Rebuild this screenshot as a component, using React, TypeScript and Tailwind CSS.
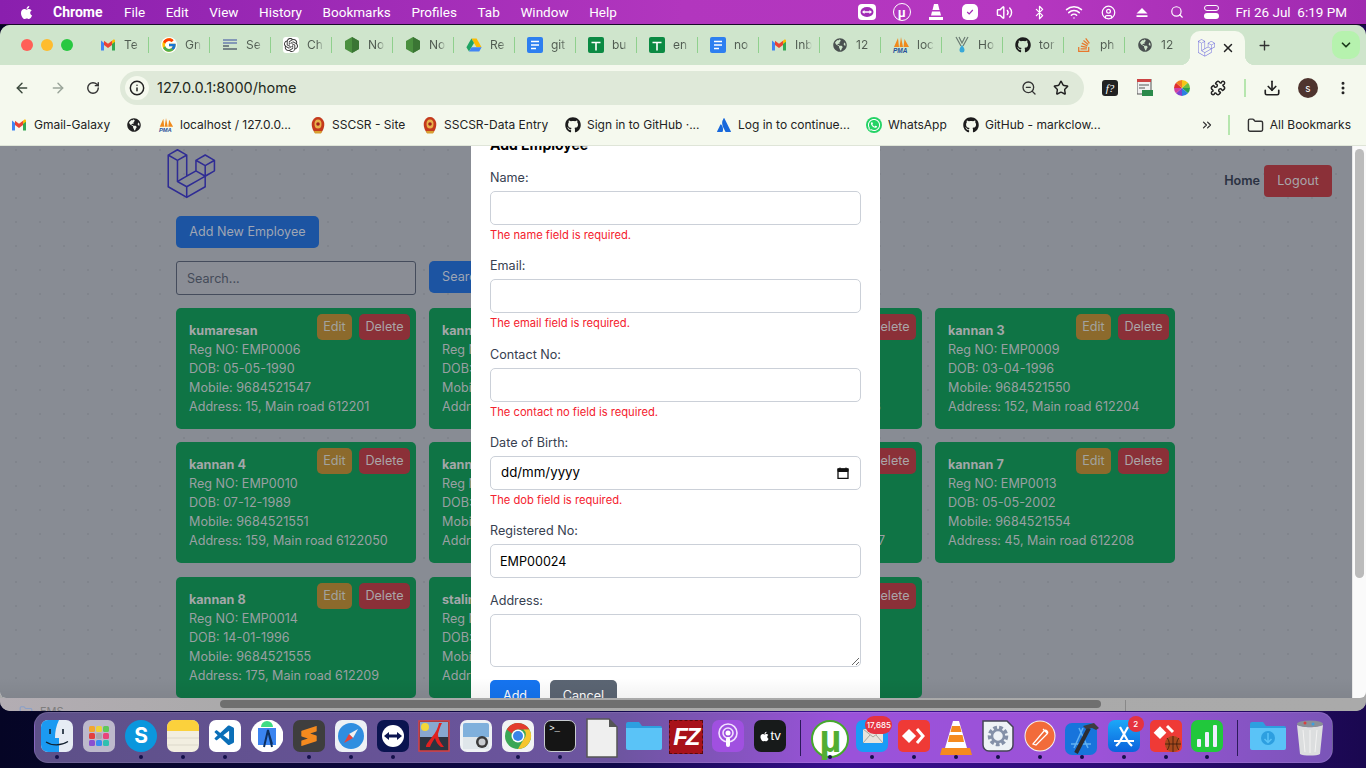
import React from "react";
import { ArrowLeft, ArrowRight, RotateCw, Info, ZoomOut, Star, Download, EllipsisVertical, Plus, X, ChevronDown, Folder, ChevronsRight, Volume2, Bluetooth, Wifi, CircleUser, Search, Puzzle } from "lucide-react";
import { FaApple, FaGithub, FaGlobeAmericas, FaStackOverflow, FaWhatsapp } from "react-icons/fa";
import { FcGoogle } from "react-icons/fc";
import { VscVscode } from "react-icons/vsc";
import { SiSublimetext, SiOpenai, SiAtlassian } from "react-icons/si";

const LARAVEL = "M49.626 11.564a.809.809 0 0 1 .028.209v10.972a.8.8 0 0 1-.402.694l-9.209 5.302V39.25c0 .286-.152.55-.4.694L20.42 51.01c-.044.025-.092.041-.14.058-.018.006-.035.017-.054.022a.805.805 0 0 1-.41 0c-.022-.006-.042-.018-.063-.026-.044-.016-.09-.03-.132-.054L.402 39.944A.801.801 0 0 1 0 39.25V6.334c0-.072.01-.142.028-.21.006-.023.02-.044.028-.067.015-.042.029-.085.051-.124.015-.026.037-.047.055-.071.023-.032.044-.065.071-.093.023-.023.053-.04.079-.06.029-.024.055-.05.088-.069h.001l9.61-5.533a.802.802 0 0 1 .8 0l9.61 5.533h.002c.032.02.059.045.088.068.026.02.055.038.078.06.028.029.048.062.072.094.017.024.04.045.054.071.023.04.036.082.052.124.008.023.022.044.028.068a.809.809 0 0 1 .028.209v20.559l8.008-4.611v-10.51c0-.07.01-.141.028-.208.007-.024.02-.045.028-.068.016-.042.03-.085.052-.124.015-.026.037-.047.054-.071.024-.032.044-.065.072-.093.023-.023.052-.04.078-.06.03-.024.056-.05.088-.069h.001l9.611-5.533a.801.801 0 0 1 .8 0l9.61 5.533c.034.02.06.045.09.068.025.02.054.038.077.06.028.029.048.062.072.094.018.024.04.045.054.071.023.039.036.082.052.124.009.023.022.044.028.068zm-1.574 10.718v-9.124l-3.363 1.936-4.646 2.675v9.124l8.01-4.611zm-9.61 16.505v-9.13l-4.57 2.61-13.05 7.448v9.216l17.62-10.144zM1.602 7.719v31.068L19.22 48.93v-9.214l-9.204-5.209-.003-.002-.004-.002c-.031-.018-.057-.044-.086-.066-.025-.02-.054-.036-.076-.058l-.002-.003c-.026-.025-.044-.056-.066-.084-.02-.027-.044-.05-.06-.078l-.001-.003c-.018-.03-.029-.066-.042-.1-.013-.03-.03-.058-.038-.09v-.001c-.01-.038-.012-.078-.016-.117-.004-.03-.012-.06-.012-.09v-.002-21.481L4.965 9.654 1.602 7.72zm8.81-5.994L2.405 6.334l8.005 4.609 8.006-4.61-8.006-4.608zm4.164 28.764l4.645-2.674V7.719l-3.363 1.936-4.646 2.675v20.096l3.364-1.937zM39.243 7.164l-8.006 4.609 8.006 4.609 8.005-4.61-8.005-4.608zm-.801 10.605l-4.646-2.675-3.363-1.936v9.124l4.645 2.674 3.364 1.937v-9.124zM20.02 38.33l11.743-6.704 5.87-3.35-8-4.606-9.211 5.303-8.395 4.833 7.993 4.524z";

const Laravel = ({ cls, color }: { cls: string; color: string }) => (
  <svg viewBox="0 0 50 52" className={cls} fill={color}><path d={LARAVEL} /></svg>
);
const Gmail = () => (
  <svg viewBox="0 0 16 16" className="h-4 w-4">
    <path d="M1 13.5V3.6l3 2.3v7.6z" fill="#4285f4" /><path d="M15 13.5V3.6l-3 2.3v7.6z" fill="#34a853" />
    <path d="M4 8V3.8l4 3 4-3V8l-4 3z" fill="#ea4335" /><path d="M12 3.8l1.4-1.2c.7-.4 1.6.1 1.6 1v1.2L12 7z" fill="#fbbc04" />
  </svg>
);
const Docs = () => (
  <svg viewBox="0 0 16 16" className="h-4 w-4"><rect width="16" height="16" x="0" y="0" rx="2" fill="#2d7ff0" /><path d="M4 4.5h8M4 8h8M4 11.5h5" stroke="#fff" strokeWidth="1.6" /></svg>
);
const Sheets = () => (
  <svg viewBox="0 0 16 16" className="h-4 w-4"><rect width="16" height="16" rx="2" fill="#0b8a43" /><path d="M3.5 5.5h9M8 5.5v8" stroke="#fff" strokeWidth="1.6" /></svg>
);
const Node = () => (
  <svg viewBox="0 0 16 16" className="h-[18px] w-[16px]"><path d="M8 0l7 4v8l-7 4-7-4V4z" fill="#4a8f3f" /><path d="M8 0l7 4v8l-7 4z" fill="#3a7534" /></svg>
);
const Drive = () => (
  <svg viewBox="0 0 16 16" className="h-4 w-4"><path d="M5.4 1.5h5.2l5 8.7H10.500z" fill="#fbbc04" /><path d="M5.400 1.500L.4 10.200l2.600 4.400 5-8.700z" fill="#1fa463" /><path d="M3 14.600h10.200l2.400-4.400H5.500z" fill="#4285f4" /></svg>
);
const Pma = () => (
  <svg viewBox="0 0 18 18" className="h-[18px] w-[18px]">
    <path d="M2 11L6 2l1 9zM7.500 11L9 1l2 10zM11.500 11L12.500 3 17 11z" fill="#f08a1c" />
    <text x="1" y="17" fontSize="6.500" fontWeight="700" fontStyle="italic" fill="#26509a" fontFamily="Liberation Sans, sans-serif">PMA</text>
  </svg>
);
const Globe = () => <FaGlobeAmericas className="h-[14px] w-[14px] text-[#4a5150]" />;
const Chatgpt = () => (
  <span className="flex h-4 w-4 items-center justify-center rounded-[3px] bg-white"><SiOpenai className="h-[14px] w-[14px] text-[#333]" /></span>
);
const Hop = () => (
  <svg viewBox="0 0 16 18" className="h-[18px] w-4"><path d="M2 1l5 9M14 1L9 10M5 1l3 6 3-6" stroke="#6a7a72" strokeWidth="1.200" fill="none" /><path d="M8 9c2 2.500 2.500 3.500 2.500 5a2.500 2.500 0 0 1-5 0c0-1.500.5-2.500 2.500-5z" fill="#38a8d8" /></svg>
);
const Emblem = () => (
  <svg viewBox="0 0 16 18" className="h-[18px] w-4"><path d="M8 1c3 0 5 2 6 5 1 4-1 9-3 11H5C3 15 1 10 2 6c1-3 3-5 6-5z" fill="#c43a1c" /><ellipse cx="8" cy="8" rx="3.500" ry="4.500" fill="#e8b14a" /><circle cx="8" cy="8" r="1.800" fill="#a3201a" /><path d="M4 15h8l-1 2.500H5z" fill="#d8a030" /></svg>
);

const tabs: [React.ReactNode, string][] = [
  [<Gmail />, "Te"], [<FcGoogle className="h-4 w-4 rounded-full bg-white" />, "Gn"],
  [<svg viewBox="0 0 16 16" className="h-4 w-4"><path d="M1 3h14M1 6h14" stroke="#6b7fb0" strokeWidth="1.500" /><path d="M1 9h6M1 12h14" stroke="#5a6470" strokeWidth="1.500" /></svg>, "Se"],
  [<Chatgpt />, "Ch"], [<Node />, "No"], [<Node />, "No"], [<Drive />, "Re"], [<Docs />, "git"], [<Sheets />, "bu"], [<Sheets />, "en"],
  [<Docs />, "no"], [<Gmail />, "Inb"], [<Globe />, "12"], [<Pma />, "loc"], [<Hop />, "Ho"],
  [<FaGithub className="h-4 w-4 text-[#1c1c1c]" />, "tor"], [<FaStackOverflow className="h-4 w-4 text-[#e8782c]" />, "ph"], [<Globe />, "12"],
];

const bookmarks: [React.ReactNode, string, string][] = [
  [<Gmail />, "Gmail-Galaxy", "w-[115px]"],
  [<FaGlobeAmericas className="h-[14px] w-[14px] text-[#222]" />, "", "w-[32px]"],
  [<Pma />, "localhost / 127.0.0...", "w-[152px]"],
  [<Emblem />, "SSCSR - Site", "w-[112px]"],
  [<Emblem />, "SSCSR-Data Entry", "w-[143px]"],
  [<FaGithub className="h-4 w-4 text-[#1c1c1c]" />, "Sign in to GitHub ·...", "w-[151px]"],
  [<SiAtlassian className="h-[14px] w-[14px] text-[#1868db]" />, "Log in to continue...", "w-[150px]"],
  [<FaWhatsapp className="h-4 w-4 rounded-full bg-[#25d366] p-[1px] text-white" />, "WhatsApp", "w-[97px]"],
  [<FaGithub className="h-4 w-4 text-[#1c1c1c]" />, "GitHub - markclow...", "w-[137px]"],
];

const menus = ["File", "Edit", "View", "History", "Bookmarks", "Profiles", "Tab", "Window", "Help"];

const MenuIcons: React.ReactNode[] = [
  <svg viewBox="0 0 18 16" className="h-[16px] w-[18px]"><rect width="18" height="16" rx="4" fill="#fff" /><ellipse cx="9" cy="8" rx="6.500" ry="5" fill="#a02cb5" /><path d="M4 8l2.500-2v1.300h5V6L14 8l-2.500 2V8.700h-5V10z" fill="#fff" /></svg>,
  <span className="flex h-[18px] w-[18px] items-center justify-center rounded-full border border-white text-[13px] font-bold leading-none text-white">µ</span>,
  <svg viewBox="0 0 16 18" className="h-[18px] w-4"><path d="M6 1h4l1.500 6h-7zM4 8.500h8l1 4H3zM1 14h14v3H1z" fill="#fff" /></svg>,
  <span className="flex h-[16px] w-[16px] items-center justify-center rounded-[5px] bg-white"><svg viewBox="0 0 10 10" className="h-2 w-2"><path d="M1.500 5l2.500 2.500L8.500 2.500" stroke="#a02cb5" strokeWidth="1.500" fill="none" /></svg></span>,
  <Volume2 className="h-[17px] w-[17px]" />,
  <Bluetooth className="h-[15px] w-[15px]" />,
  <Wifi className="h-[18px] w-[18px]" />,
  <CircleUser className="h-[15px] w-[15px]" />,
  <svg viewBox="0 0 14 12" className="h-[11px] w-[14px]"><path d="M7 1l6 6H1zM1 9h12v2H1z" fill="#fff" /></svg>,
  <Search className="h-[14px] w-[14px]" />,
  <span className="flex w-[15px] flex-col gap-[2px]"><span className="h-[6px] rounded-full border border-white" /><span className="h-[6px] rounded-full bg-white" /></span>,
];

type Emp = { name: string; reg: string; dob: string; mobile: string; addr: string };
const emps: Emp[] = [
  { name: "kumaresan", reg: "EMP0006", dob: "05-05-1990", mobile: "9684521547", addr: "15, Main road 612201" },
  { name: "kannan", reg: "EMP0007", dob: "02-03-1992", mobile: "9684521548", addr: "25, Main road 612202" },
  { name: "kannan 2", reg: "EMP0008", dob: "11-06-1994", mobile: "9684521549", addr: "35, Main road 612203" },
  { name: "kannan 3", reg: "EMP0009", dob: "03-04-1996", mobile: "9684521550", addr: "152, Main road 612204" },
  { name: "kannan 4", reg: "EMP0010", dob: "07-12-1989", mobile: "9684521551", addr: "159, Main road 6122050" },
  { name: "kannan 5", reg: "EMP0011", dob: "09-09-1991", mobile: "9684521552", addr: "65, Main road 612206" },
  { name: "kannan 6", reg: "EMP0012", dob: "21-08-1993", mobile: "9684521553", addr: "159, Main road 612207" },
  { name: "kannan 7", reg: "EMP0013", dob: "05-05-2002", mobile: "9684521554", addr: "45, Main road 612208" },
  { name: "kannan 8", reg: "EMP0014", dob: "14-01-1996", mobile: "9684521555", addr: "175, Main road 612209" },
  { name: "stalin", reg: "EMP0015", dob: "10-10-1990", mobile: "9684521556", addr: "18, Main road 612210" },
  { name: "kannan 9", reg: "EMP0016", dob: "12-02-1995", mobile: "9684521557", addr: "20, Main road 612211" },
];

function Card({ e }: { e: Emp }) {
  return (
    <div className="relative h-[121px] rounded-[5px] bg-[#0f7445] px-[13px] py-[13px] text-[12.600px] leading-[19px] text-[#9aa0a3]">
      <div className="font-bold text-[#a3a7a9]">{e.name}</div>
      <div>Reg NO: {e.reg}</div>
      <div>DOB: {e.dob}</div>
      <div>Mobile: {e.mobile}</div>
      <div>Address: {e.addr}</div>
      <div className="absolute right-[6px] top-[6px] flex gap-[7px]">
        <span className="flex h-[26px] w-[35px] items-center justify-center rounded-[5px] bg-[#8c6a2c] pb-[1px] text-[#a2a39f]">Edit</span>
        <span className="flex h-[26px] w-[51px] items-center justify-center rounded-[5px] bg-[#8b3038] pb-[1px] text-[#aaa6a9]">Delete</span>
      </div>
    </div>
  );
}

function Field({ label, error, children, mb }: { label: string; error?: string; children: React.ReactNode; mb: string }) {
  return (
    <div className={mb}>
      <div className="mb-[3px] h-5 text-[12.600px] leading-[20px] text-[#374151]">{label}</div>
      {children}
      {error && <div className="mt-[2px] h-4 text-[11.200px] leading-4 text-[#f4222e]">{error}</div>}
    </div>
  );
}
const inputCls = "block h-[34px] w-full rounded-[5px] border border-[#cbd0d8] bg-white px-[9px] text-[12.600px] text-black outline-none";

const Dot = () => <span className="absolute bottom-[3px] h-[4px] w-[4px] rounded-full bg-[#14104a]" />;

function Badge({ t, cls }: { t: string; cls: string }) {
  return <span className={"absolute flex h-[18px] items-center justify-center rounded-full bg-[#e5333f] text-[8px] font-medium text-white " + cls}>{t}</span>;
}

const S = ({ children }: { children: React.ReactNode }) => <svg viewBox="0 0 32 32" className="h-8 w-8">{children}</svg>;

const dock: { i: React.ReactNode; on: boolean }[] = [
  { on: true, i: <S><rect width="32" height="32" rx="7" fill="#e6ecf4" /><path d="M7 0h11c-3 6-4 12-4 18h4v14H7a7 7 0 0 1-7-7V7a7 7 0 0 1 7-7z" fill="#1b9af2" /><path d="M9 9v5M22 9v5" stroke="#12202e" strokeWidth="1.600" /><path d="M5 22c6 4 15 4 22-.5" stroke="#12202e" strokeWidth="1.200" fill="none" /></S> },
  { on: false, i: <S><rect width="32" height="32" rx="7" fill="#bdb9cc" /><g>{[["#f2a62e", 6, 6], ["#ecd23a", 13, 6], ["#5fc85a", 20, 6], ["#e33e3e", 6, 13], ["#a8a8b0", 13, 13], ["#e8457a", 20, 13], ["#8a4fd0", 6, 20], ["#3a8cf0", 13, 20], ["#30c0b0", 20, 20]].map(([c, x, y]) => <rect key={`${x}${y}`} x={x as number} y={y as number} width="6" height="6" rx="1.500" fill={c as string} />)}</g></S> },
  { on: true, i: <span className="flex h-8 w-8 items-center justify-center rounded-full bg-[#0b97dd] text-[21px] font-bold text-white">S</span> },
  { on: true, i: <S><rect width="32" height="32" rx="7" fill="#f2eee0" /><path d="M0 11V7a7 7 0 0 1 7-7h18a7 7 0 0 1 7 7v4z" fill="#fbd13c" /><path d="M0 18h32M0 25h32" stroke="#dcd8ca" /></S> },
  { on: true, i: <span className="flex h-8 w-8 items-center justify-center rounded-[7px] bg-white"><VscVscode className="h-6 w-6 text-[#0b6fb8]" /></span> },
  { on: false, i: <S><circle cx="16" cy="16" r="16.500" fill="#fff" /><path d="M10 7a6 6 0 0 1 12 0z" fill="#3ddc84" /><rect x="7" y="8" width="18" height="17" fill="#3a84f0" /><path d="M13 27l4-17 4 17M18 14l3 10" stroke="#0c2f60" strokeWidth="2" fill="none" /></S> },
  { on: true, i: <span className="flex h-8 w-8 items-center justify-center rounded-[7px] bg-[#3e3e3e]"><SiSublimetext className="h-5 w-5 text-[#f58a1f]" /></span> },
  { on: true, i: <S><rect width="32" height="32" rx="7" fill="#edf1f5" /><circle cx="16" cy="16" r="13" fill="#2f8ee0" /><path d="M23 9l-9 5 4 4z" fill="#f0f0f0" /><path d="M9 23l5-9 4 4z" fill="#e8433a" /></S> },
  { on: true, i: <S><rect width="32" height="32" rx="7" fill="#0a1450" /><circle cx="16" cy="16" r="11" fill="#fff" /><path d="M7 16l5-4v2.500h8V12l5 4-5 4v-2.500h-8V20z" fill="#0a1450" /></S> },
  { on: false, i: <S><rect x="1" y="1" width="30" height="30" fill="#2c3440" stroke="#d84040" strokeWidth="1.500" /><rect x="2" y="2" width="28" height="15" fill="#88a8d0" /><circle cx="7" cy="7" r="4" fill="#f4d838" /><path d="M21 3c-1 5-3 9-7 14-3 4-6 7-6 10h4c1-3 3-6 5-9 1 4 3 7 6 9h3c-3-4-6-8-6-13 1-4 2-7 4-11z" fill="#e02020" /></S> },
  { on: false, i: <S><rect width="32" height="32" rx="7" fill="#eef1f4" /><rect x="3" y="3" width="26" height="26" rx="2" fill="#7fb0dc" /><rect x="3" y="17" width="26" height="12" fill="#dfe6ea" /><circle cx="22" cy="22" r="6" fill="#3a3a3a" /><circle cx="22" cy="22" r="3.500" fill="#c8ccd0" /></S> },
  { on: true, i: <S><rect width="32" height="32" rx="7" fill="#f2f3f4" /><circle cx="16" cy="16" r="13" fill="#3aa655" /><path d="M16 3a13 13 0 0 1 11.300 6.500H16a6.500 6.500 0 0 0-6 4L4.800 9.500A13 13 0 0 1 16 3z" fill="#e33b2e" /><path d="M27.300 9.500A13 13 0 0 1 16 29l5.500-9.500a6.500 6.500 0 0 0 0-10z" fill="#f7c52d" /><circle cx="16" cy="16" r="6.500" fill="#fff" /><circle cx="16" cy="16" r="5" fill="#3a84e8" /></S> },
  { on: true, i: <span className="flex h-8 w-8 items-start rounded-[7px] border border-[#c8ccd0] bg-[#151515] p-[4px] font-['Liberation_Mono'] text-[9px] leading-none text-white">&gt;_</span> },
  { on: false, i: <svg viewBox="0 0 32 40" className="mt-[-5px] h-[46px] w-[32px]"><path d="M1 1h22l8 8v30H1z" fill="#efefef" stroke="#555" strokeWidth="1.500" /><path d="M23 1l8 8h-8z" fill="#555" /></svg> },
  { on: false, i: <svg viewBox="0 0 36 32" className="h-8 w-9"><path d="M0 4a2 2 0 0 1 2-2h11l3 4h18a2 2 0 0 1 2 2v4H0z" fill="#2d9fe0" /><path d="M0 8h36v20a2 2 0 0 1-2 2H2a2 2 0 0 1-2-2z" fill="#5ac3f7" /></svg> },
  { on: false, i: <span className="flex h-[34px] w-[34px] items-center justify-center border border-dashed border-[#5a0a0a] bg-[#a8121a] font-['Liberation_Sans'] text-[24px] font-bold italic leading-none tracking-[-2px] text-white">FZ</span> },
  { on: false, i: <S><rect width="32" height="32" rx="7" fill="#a050e0" /><circle cx="16" cy="13" r="9" fill="none" stroke="#f2e2ff" strokeWidth="1.600" /><circle cx="16" cy="13" r="5" fill="none" stroke="#f2e2ff" strokeWidth="1.600" /><circle cx="16" cy="13" r="2.500" fill="#fff" /><rect x="14" y="17" width="4" height="10" rx="2" fill="#fff" /></S> },
  { on: false, i: <span className="flex h-8 w-8 items-center justify-center gap-[1px] rounded-[7px] bg-[#171a1a] font-['Liberation_Sans'] text-[13px] font-medium text-white"><FaApple className="h-[11px] w-[11px]" />tv</span> },
  { on: true, i: <span className="relative block h-[38px] w-[38px]"><span className="absolute inset-0 flex items-center justify-center rounded-full border-[2px] border-[#45a92c] bg-white font-['Liberation_Sans'] text-[38px] font-bold leading-none text-[#52ae32]">µ</span></span> },
  { on: true, i: <span className="relative block h-8 w-8"><S><rect width="32" height="32" rx="7" fill="#1a9cf6" /><rect x="7" y="9" width="20" height="14" fill="#e8e4dc" /><path d="M7 9l10 8 10-8M7 23l7-8M27 23l-7-8" stroke="#a8a8a0" fill="none" /></S><Badge t="17,685" cls="-top-[4px] -right-[4px] w-[27px]" /></span> },
  { on: true, i: <S><rect width="32" height="32" rx="5" fill="#ef3a36" /><rect x="6" y="11" width="10" height="10" transform="rotate(45 11 16)" fill="#fff" /><path d="M19 9l6 7-6 7" stroke="#fff" strokeWidth="3" fill="none" /></S> },
  { on: true, i: <svg viewBox="0 0 32 36" className="h-9 w-8"><path d="M13 1h6l8 27H5z" fill="#fff" /><path d="M12 6h8l1.500 6H10.500zM9.500 15h13l1.500 7H8z" fill="#f58a1f" /><path d="M2 28h28l2 7H0z" fill="#f58a1f" /></svg> },
  { on: true, i: <S><path d="M1 1h24l6 6v18a6 6 0 0 1-6 6H7a6 6 0 0 1-6-6z" fill="#eef2f6" stroke="#445" strokeWidth="1.500" /><circle cx="16" cy="16" r="8" fill="none" stroke="#8490a8" strokeWidth="4.500" strokeDasharray="3.500 2" /><circle cx="16" cy="16" r="6" fill="none" stroke="#8490a8" strokeWidth="2.500" /></S> },
  { on: true, i: <S><circle cx="16" cy="16" r="15.500" fill="#f4f4f4" /><circle cx="16" cy="16" r="14.500" fill="#f26b3a" /><path d="M9 24L20 11c2-2 5 1 3 3L12 25zM19 9l4 4" stroke="#fff" strokeWidth="1.200" fill="none" /></S> },
  { on: true, i: <svg viewBox="0 0 36 36" className="h-9 w-9"><rect x="1" y="3" width="32" height="32" rx="7" fill="#1774dc" /><path d="M10 28l9-20M24 28L15 8M7 24h20" stroke="#62b2f2" strokeWidth="1.500" /><path d="M12 33L25 8" stroke="#2c2c30" strokeWidth="4" /><path d="M19 6l11-3 5 5-3 2-4-2-6 1z" fill="#3c3c40" /></svg> },
  { on: true, i: <span className="relative block h-8 w-8"><S><defs><linearGradient id="as" x1="0" y1="0" x2="0" y2="1"><stop offset="0" stopColor="#1ca8f8" /><stop offset="1" stopColor="#0c62dc" /></linearGradient></defs><rect width="32" height="32" rx="7" fill="url(#as)" /><path d="M12 7l9 16M20 7L11 23M6 21h20M21 23l3 3M11 23l-3 3" stroke="#fff" strokeWidth="2.200" fill="none" /></S><Badge t="2" cls="-top-[4px] -right-[4px] w-[16px] !h-[16px]" /></span> },
  { on: true, i: <S><rect width="32" height="32" rx="5" fill="#ef3a36" /><rect x="6" y="8" width="9" height="9" transform="rotate(45 10 12)" fill="#fff" /><path d="M17 6l6 6" stroke="#fff" strokeWidth="3" /><circle cx="23" cy="24" r="8" fill="#a84a1e" /><path d="M15 24h16M23 16v16M17 18c3 3 3 9 0 12M29 18c-3 3-3 9 0 12" stroke="#3a1a0a" strokeWidth=".8" fill="none" /></S> },
  { on: true, i: <S><rect width="32" height="32" rx="7" fill="#21c83c" /><rect x="6" y="19" width="4" height="8" rx="1" fill="#eef" /><rect x="14" y="12" width="4" height="15" rx="1" fill="#eef" /><rect x="22" y="5" width="4" height="22" rx="1" fill="#eef" /></S> },
  { on: false, i: <svg viewBox="0 0 36 32" className="h-8 w-9"><path d="M0 4a2 2 0 0 1 2-2h11l3 4h18a2 2 0 0 1 2 2v4H0z" fill="#2d9fe0" /><path d="M0 8h36v20a2 2 0 0 1-2 2H2a2 2 0 0 1-2-2z" fill="#5ac3f7" /><circle cx="18" cy="18" r="7" fill="#2d9fe0" /><path d="M18 13v9M14.500 19l3.500 3.500 3.500-3.500" stroke="#5ac3f7" strokeWidth="1.500" fill="none" /></svg> },
  { on: false, i: <svg viewBox="0 0 28 36" className="h-9 w-7"><ellipse cx="14" cy="4" rx="13" ry="3.500" fill="#8a9098" /><path d="M1 5l3 29c3 2 17 2 20 0l3-29c-5 3-21 3-26 0z" fill="#dcdedf" /><path d="M7 10l2 22M14 10v23M21 10l-2 22" stroke="#f2f2f2" /><circle cx="9" cy="3" r="1.500" fill="#d84040" /><circle cx="17" cy="4" r="1.500" fill="#3aa0e0" /></svg> },
];

export default function App() {
  const font = { fontFamily: "Inter, 'Noto Sans', sans-serif" };
  return (
    <div style={font} className="flex h-[768px] w-[1366px] flex-col overflow-hidden bg-[linear-gradient(90deg,#050525_0%,#10084a_45%,#3a0e90_62%,#2a0a70_85%,#1a0850_100%)]">
      {/* macOS menu bar */}
      <div className="flex h-[25px] shrink-0 items-center border-b border-[#1a0a2a] bg-[linear-gradient(90deg,#8a1fae_0%,#b236be_50%,#b537c0_75%,#a02ab0_100%)] font-['Roboto'] text-[13.500px] text-white">
        <FaApple className="ml-[19px] h-[15px] w-[15px]" />
        <span className="ml-[19px] w-[51px] text-[14px] font-bold">Chrome</span>
        <div className="ml-[20px] flex gap-[20.600px]">{menus.map((m) => <span key={m}>{m}</span>)}</div>
        <div className="ml-auto flex items-center">
          {MenuIcons.map((ic, i) => <span key={i} className="flex w-[34.400px] justify-center text-white">{ic}</span>)}
          <span className="ml-[7px] mr-[19px] whitespace-pre">Fri 26 Jul  6:19 PM</span>
        </div>
      </div>

      {/* Browser window */}
      <div className="flex h-[686px] shrink-0 flex-col overflow-hidden rounded-[10px] bg-[#a9a9a9]">
        {/* tabs */}
        <div className="flex h-10 shrink-0 items-end bg-[#cfe5cc]">
          <div className="flex h-full w-[88px] shrink-0 items-center gap-2 pl-[21px]">
            <span className="h-3 w-3 rounded-full bg-[#ff5f57]" />
            <span className="h-3 w-3 rounded-full bg-[#febc2e]" />
            <span className="h-3 w-3 rounded-full bg-[#28c840]" />
          </div>
          {tabs.map(([ic, t], i) => (
            <div key={i} className="relative flex h-full w-[61px] shrink-0 items-center pl-[11px]">
              <span className="flex w-[18px] justify-center">{ic}</span>
              <span className="ml-[7px] w-[17px] overflow-hidden whitespace-nowrap bg-[linear-gradient(90deg,#4f5a50_60%,#cfe5cc)] bg-clip-text text-[12px] text-transparent">{t}</span>
              {i < tabs.length - 1 && <span className="absolute right-0 top-[12px] h-4 w-[1.500px] bg-[#8fd08d]" />}
            </div>
          ))}
          <div className="relative ml-[4px] flex h-[34px] w-[55px] shrink-0 items-center rounded-t-[10px] bg-[#f5f9ee] pl-[8px]">
            <span className="absolute -left-[10px] bottom-0 h-[10px] w-[10px] bg-[radial-gradient(circle_at_0_0,transparent_10px,#f5f9ee_10.500px)]" />
            <span className="absolute -right-[10px] bottom-0 h-[10px] w-[10px] bg-[radial-gradient(circle_at_100%_0,transparent_10px,#f5f9ee_10.500px)]" />
            <Laravel cls="h-[18px] w-[17px]" color="#7a78e0" />
            <X className="ml-[6px] h-[14px] w-[14px] text-[#222]" strokeWidth={2.5} />
          </div>
          <Plus className="ml-[12px] mb-[12px] h-[15px] w-[15px] text-[#333]" strokeWidth={2.200} />
          <div className="mb-[6px] ml-[60px] flex h-[28px] w-[28px] items-center justify-center rounded-[10px] bg-[#b6f2ae]">
            <ChevronDown className="h-[14px] w-[14px] text-[#1c3a1c]" strokeWidth={3} />
          </div>
        </div>

        {/* toolbar */}
        <div className="flex h-[42px] shrink-0 items-center bg-[#f5f9ee] pt-[4px] text-[#3d4a3e]">
          <ArrowLeft className="ml-[14px] h-4 w-4" strokeWidth={2.200} />
          <ArrowRight className="ml-[20px] h-4 w-4 text-[#9aa59a]" strokeWidth={2.200} />
          <RotateCw className="ml-[20px] h-[14px] w-[14px] text-[#333]" strokeWidth={2.400} />
          <div className="ml-[20px] flex h-[34px] w-[964px] items-center rounded-full bg-[#dfe9d9] pl-[5px] pr-[15px]">
            <span className="flex h-6 w-6 items-center justify-center rounded-full bg-[#f5f9ee]"><Info className="h-4 w-4 text-[#222]" strokeWidth={2.200} /></span>
            <span className="ml-[8px] text-[14.500px] text-[#1f2a20]">127.0.0.1:8000/home</span>
            <ZoomOut className="ml-auto h-4 w-4 text-[#333]" />
            <Star className="ml-[16px] h-4 w-4 text-[#222]" strokeWidth={2.200} />
          </div>
          <span className="ml-[18px] flex h-4 w-4 items-center justify-center rounded-[3px] bg-[#222] font-['Liberation_Serif'] text-[11px] italic text-white">f?</span>
          <svg viewBox="0 0 16 18" className="ml-[19px] h-[18px] w-4"><rect x="0" y="0" width="14" height="15" fill="#f0f0f0" stroke="#555" /><rect x="0" y="0" width="14" height="3" fill="#c44" /><path d="M2 6h10M2 9h6" stroke="#555" /><rect x="5" y="11" width="11" height="6" fill="#2a8a4a" /></svg>
          <svg viewBox="0 0 16 16" className="ml-[21px] h-4 w-4"><path d="M8 8V0a8 8 0 0 1 6 2.700z" fill="#f5c518" /><path d="M8 8l6-5.300A8 8 0 0 1 16 8z" fill="#6fc040" /><path d="M8 8h8a8 8 0 0 1-2 5.300z" fill="#2aa050" /><path d="M8 8l6 5.300A8 8 0 0 1 8 16z" fill="#2a80e0" /><path d="M8 8v8a8 8 0 0 1-6-2.700z" fill="#8040d0" /><path d="M8 8l-6 5.300A8 8 0 0 1 0 8z" fill="#d040a0" /><path d="M8 8H0a8 8 0 0 1 2-5.300z" fill="#e03030" /><path d="M8 8L2 2.700A8 8 0 0 1 8 0z" fill="#f08020" /></svg>
          <Puzzle className="ml-[20px] h-4 w-4 text-[#222]" strokeWidth={2.200} />
          <span className="ml-[18px] h-[18px] w-[2px] bg-[#b6e6ae]" />
          <Download className="ml-[17px] h-[18px] w-[18px] text-[#222]" strokeWidth={2.200} />
          <span className="ml-[17px] flex h-5 w-5 items-center justify-center rounded-full bg-[#4e342e] text-[10px] text-white">s</span>
          <EllipsisVertical className="ml-[17px] h-4 w-4 text-[#222]" strokeWidth={2.500} />
        </div>

        {/* bookmarks */}
        <div className="flex h-[39px] shrink-0 items-center border-b border-[#dfe5d8] bg-[#f5f9ee] pb-[2px] pl-[11px] text-[12px] text-[#222]">
          {bookmarks.map(([ic, t, w], i) => (
            <div key={i} className={"flex shrink-0 items-center gap-[6px] " + w}>
              <span className="flex w-4 justify-center">{ic}</span>
              {t && <span className={i === 0 ? "ml-[1px] whitespace-nowrap" : "whitespace-nowrap"}>{t}</span>}
            </div>
          ))}
          <ChevronsRight className="ml-auto h-[14px] w-[14px] text-[#333]" strokeWidth={2.200} />
          <span className="ml-[14px] h-5 w-[2px] bg-[#b6e6ae]" />
          <Folder className="ml-[17px] h-[17px] w-[17px] text-[#333]" />
          <span className="ml-[6px] mr-[15px] whitespace-nowrap">All Bookmarks</span>
        </div>

        {/* page viewport */}
        <div className="relative flex h-[552px] shrink-0 overflow-hidden rounded-b-[6px] bg-[#fafafa]">
          <div className="relative h-full w-[1352px] shrink-0 overflow-hidden bg-[#888c94] bg-[radial-gradient(circle,#80848c_1px,transparent_1.200px)] bg-[size:24px_24px] bg-[position:4px_-8px]">
            <div className="flex h-[53px] items-start justify-between pl-[167px] pr-[20px]">
              <Laravel cls="mt-[3px] h-[50px] w-[49px]" color="#2f2c94" />
              <div className="mt-[19px] flex items-center gap-[4px] text-[12.600px]">
                <span className="font-semibold text-[#2b3242]">Home</span>
                <span className="flex h-[32px] w-[68px] items-center justify-center rounded-[4px] bg-[#8b3038] pt-[1px] text-[#a8a6aa]">Logout</span>
              </div>
            </div>
            <div className="pl-[176px] text-[12.600px]">
              <div className="mt-[17px] flex h-[32px] w-[143px] items-center justify-center rounded-[5px] bg-[#1c54a2] pt-[1px] text-[#9fa6b4]">Add New Employee</div>
              <div className="mt-[13px] flex items-start gap-[13px]">
                <div className="flex h-[34px] w-[240px] items-center rounded-[3px] border border-[#454c5c] bg-[#8a8d95] px-[10px] pt-[2px] text-[#444b59]">Search...</div>
                <div className="flex h-[32px] w-[68px] items-center justify-center rounded-[5px] bg-[#1c54a2] pt-[1px] text-[#9fa6b4]">Search</div>
              </div>
              <div className="mt-[13px] grid w-[999px] grid-cols-[repeat(4,240px)] gap-x-[13px] gap-y-[13.300px]">
                {emps.map((e) => <Card key={e.reg} e={e} />)}
              </div>
            </div>

            {/* modal */}
            <div className="absolute left-[471px] top-0 h-full w-[409px] overflow-hidden bg-white px-[19px]">
              <div className="-mt-[11px] mb-[13px] h-5 text-[14px] font-bold leading-5 text-black">Add Employee</div>
              <Field mb="mb-[13.250px]" label="Name:" error="The name field is required."><input className={inputCls} /></Field>
              <Field mb="mb-[13.250px]" label="Email:" error="The email field is required."><input className={inputCls} /></Field>
              <Field mb="mb-[13.250px]" label="Contact No:" error="The contact no field is required."><input className={inputCls} /></Field>
              <Field mb="mb-[13.250px]" label="Date of Birth:" error="The dob field is required.">
                <div className="flex h-[34px] w-full items-center justify-between rounded-[5px] border border-[#cbd0d8] bg-white pl-[10px] pr-[11px] text-[13.300px] text-black">
                  <span>dd/mm/yyyy</span>
                  <svg viewBox="0 0 12 12" className="h-3 w-3"><path d="M1 2h10v9.500H1z" fill="none" stroke="#111" strokeWidth="1.300" /><path d="M1 2h10v2.500H1zM3 .5v2M9 .5v2" fill="#111" stroke="#111" /></svg>
                </div>
              </Field>
              <Field mb="mb-[12.750px]" label="Registered No:"><input className={inputCls} defaultValue="EMP00024" /></Field>
              <Field mb="mb-[13px]" label="Address:"><textarea className="block h-[53px] w-full rounded-[5px] border border-[#cbd0d8] bg-white outline-none" /></Field>
              <div className="flex gap-[10px] text-[12.600px] text-white">
                <span className="flex h-[34px] w-[50px] items-center justify-center rounded-[5px] bg-[#1574f0]">Add</span>
                <span className="flex h-[34px] w-[67px] items-center justify-center rounded-[5px] bg-[#5b6573]">Cancel</span>
              </div>
            </div>
            <div className="absolute bottom-0 left-0 h-5 w-full bg-[linear-gradient(180deg,transparent,rgba(0,0,0,0.05))]" />
          </div>
          <div className="flex-1 border-l border-[#e8e8e8] pl-[2px] pt-[3px]">
            <div className="h-[429px] w-[9px] rounded-full bg-[#bbbbbb]" />
          </div>
        </div>

        {/* horizontal scrollbar / download shelf peeking below */}
        <div className="relative flex h-[13px] shrink-0 items-start overflow-hidden bg-[linear-gradient(90deg,#b3adb3,#a9a9a9_20%,#aaaaaa)] pl-[220px] pt-[2px]">
          <Folder className="absolute left-[19px] top-[7px] h-[14px] w-[14px] text-[#8aa0c8]" />
          <span className="absolute left-[40px] top-[6px] text-[11px] leading-[14px] text-[#7e7e7e]">EMS</span>
          <div className="h-[8px] w-[881px] rounded-full bg-[#6f6f6f]" />
          <div className="ml-[24px] h-[11px] w-px bg-[#888]" />
        </div>
      </div>

      {/* Dock */}
      <div className="ml-[33.500px] mt-[1px] flex h-[51px] w-[1299px] shrink-0 items-start rounded-[14px] border border-white/10 bg-[linear-gradient(90deg,#5d5088_0%,#6d55a0_45%,#9a52da_62%,#9c52d8_82%,#7a55b8_100%)] pl-[2px]">
        {dock.map((d, idx) => (
          <React.Fragment key={idx}>
            <div className="relative flex h-full w-[41.900px] shrink-0 justify-center pt-[7px]">
              {d.i}
              {d.on && <Dot />}
            </div>
            {(idx === 17 || idx === 27) && (
              <div className="flex h-full w-[19px] shrink-0 justify-center pt-[7px]"><span className="h-[36px] w-px bg-[#2c1a5a]" /></div>
            )}
          </React.Fragment>
        ))}
      </div>
    </div>
  );
}
